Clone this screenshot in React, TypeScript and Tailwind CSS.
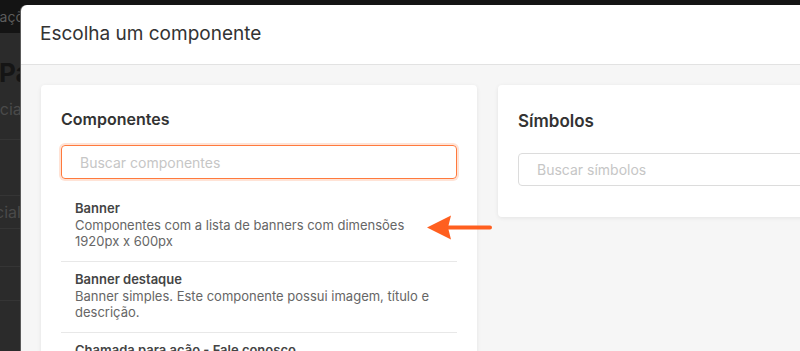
import React from 'react';

// --- Background page (dimmed behind the modal) ---
const BackgroundPage: React.FC = () => (
  <div className="flex flex-col">
    <div className="h-[33px] bg-[#141414] flex items-center overflow-hidden">
      <span className="whitespace-nowrap ml-[-58px] text-sm text-[#5c5c5c]">Configurações</span>
    </div>
    <div className="h-[107px] border-b border-[#353535] pt-6 overflow-hidden">
      <div className="whitespace-nowrap ml-[-1px] text-[26px] leading-8 font-bold text-[#151515]">Páginas</div>
      <div className="whitespace-nowrap ml-[-46px] mt-2 text-base text-[#4a4a4a]">Gerenciar suas páginas</div>
    </div>
    <div className="h-[56px] border-b border-[#353535]" />
    <div className="h-[33px] border-b border-[#353535] flex items-center overflow-hidden">
      <span className="whitespace-nowrap ml-[-78px] text-base text-[#4a4a4a]">Página inicial</span>
    </div>
    <div className="h-[38px] border-b border-[#353535]" />
    <div className="h-[34px] border-b border-[#353535]" />
    <div className="h-[50px]" />
  </div>
);

// --- List item ---
const ComponentItem: React.FC<{ title: string; description: string }> = ({ title, description }) => (
  <div className="border-b border-[#e8e8e8] px-3.5 pt-2 pb-3">
    <div className="text-[13px] leading-[18px] font-semibold text-[#444]">{title}</div>
    <div className="text-[13px] leading-4 text-[#666]">{description}</div>
  </div>
);

const components = [
  { title: 'Banner', description: 'Componentes com a lista de banners com dimensões 1920px x 600px' },
  { title: 'Banner destaque', description: 'Banner simples. Este componente possui imagem, título e descrição.' },
  { title: 'Chamada para ação - Fale conosco', description: 'Componente com título, texto e botão de contato.' },
];

export default function App() {
  return (
    <div className="relative w-[800px] h-[351px] overflow-hidden bg-[#2b2b2b] font-[Inter,sans-serif]">
      <BackgroundPage />

      {/* Modal */}
      <div className="absolute left-[21px] top-[5px] w-[933px] h-[400px] rounded-tl-md bg-white overflow-hidden shadow-[-1px_0_0_#5a5a5a]">
        <div className="h-[60px] border-b border-[#e2e2e2] flex items-center px-[19px]">
          <h2 className="text-[19px] text-[#333]">Escolha um componente</h2>
        </div>
        <div className="h-full bg-[#f6f6f6] p-5 grid grid-cols-2 gap-[21px] items-start">
          {/* Componentes */}
          <div className="bg-white rounded shadow-[0_1px_4px_rgba(0,0,0,0.08)] px-5 pt-5 h-[300px]">
            <h3 className="text-base leading-7 font-semibold text-[#333]">Componentes</h3>
            <input
              placeholder="Buscar componentes"
              className="mt-3 h-[34px] w-full rounded border border-[#ff7a3d] ring-2 ring-[#ffe3d6] px-[18px] text-sm text-[#333] placeholder:text-[#c6c6c6] outline-none"
            />
            <div className="mt-3">
              {components.map((c) => (
                <ComponentItem key={c.title} title={c.title} description={c.description} />
              ))}
            </div>
          </div>

          {/* Símbolos */}
          <div className="bg-white rounded shadow-[0_1px_4px_rgba(0,0,0,0.08)] px-5 pt-5 pb-[31px]">
            <h3 className="text-[17px] leading-8 font-semibold text-[#333]">Símbolos</h3>
            <input
              placeholder="Buscar símbolos"
              className="mt-4 h-[33px] w-full rounded border border-[#dcdcdc] px-[18px] text-sm text-[#333] placeholder:text-[#c6c6c6] outline-none"
            />
          </div>
        </div>
      </div>

      {/* Annotation arrow */}
      <svg className="absolute left-[426px] top-[214px]" width="66" height="27" viewBox="0 0 66 27">
        <path d="M1 13.5 L25 1.5 L22 13.5 L25 25.5 Z" fill="#ff5f1f" />
        <line x1="20" y1="13.5" x2="64" y2="13.5" stroke="#ff5f1f" strokeWidth="4" strokeLinecap="round" />
      </svg>
    </div>
  );
}
